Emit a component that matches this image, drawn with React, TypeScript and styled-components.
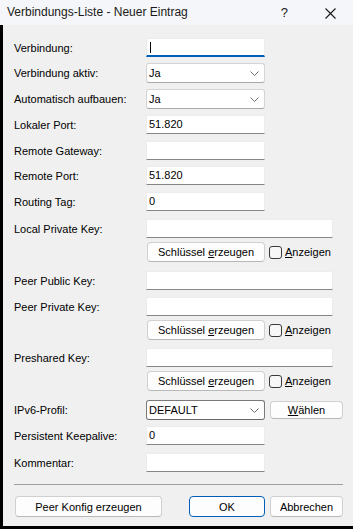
import styled, { createGlobalStyle } from "styled-components";

const GlobalStyle = createGlobalStyle`
  html, body {
    margin: 0;
    padding: 0;
    background: #f0f0f0;
  }
  body {
    font-family: "Liberation Sans", Arial, sans-serif;
  }
`;

function App(): JSX.Element {
  return (
    <Window>
      <GlobalStyle />
      <TitleBar>
        <Title>Verbindungs-Liste - Neuer Eintrag</Title>
        <TitleButtons>
          <HelpGlyph>?</HelpGlyph>
          <CloseIcon width="11" height="11" viewBox="0 0 11 11">
            <path d="M0.5 0.5 L10.5 10.5 M10.5 0.5 L0.5 10.5" stroke="#1a1a1a" strokeWidth="1.1" />
          </CloseIcon>
        </TitleButtons>
      </TitleBar>

      <Body>
        <Row $mt={0}>
          <Label>Verbindung:</Label>
          <TextBox $focused>
            <Caret />
          </TextBox>
        </Row>
        <Row $mt={6}>
          <Label>Verbindung aktiv:</Label>
          <Combo value="Ja" />
        </Row>
        <Row $mt={7}>
          <Label>Automatisch aufbauen:</Label>
          <Combo value="Ja" />
        </Row>
        <Row $mt={7}>
          <Label>Lokaler Port:</Label>
          <TextBox>51.820</TextBox>
        </Row>
        <Row $mt={7}>
          <Label>Remote Gateway:</Label>
          <TextBox />
        </Row>
        <Row $mt={6}>
          <Label>Remote Port:</Label>
          <TextBox>51.820</TextBox>
        </Row>
        <Row $mt={7}>
          <Label>Routing Tag:</Label>
          <TextBox>0</TextBox>
        </Row>

        <Row $mt={8}>
          <Label>Local Private Key:</Label>
          <TextBox $wide />
        </Row>
        <KeyActions />

        <Row $mt={9}>
          <Label>Peer Public Key:</Label>
          <TextBox $wide />
        </Row>
        <Row $mt={7}>
          <Label>Peer Private Key:</Label>
          <TextBox $wide />
        </Row>
        <KeyActions />

        <Row $mt={8}>
          <Label>Preshared Key:</Label>
          <TextBox $wide />
        </Row>
        <KeyActions />

        <Row $mt={9} $h={20}>
          <Label>IPv6-Profil:</Label>
          <Inline>
            <Combo value="DEFAULT" dark />
            <SmallButton $w={73}>
              <span>
                <u>W</u>ählen
              </span>
            </SmallButton>
          </Inline>
        </Row>
        <Row $mt={6}>
          <Label>Persistent Keepalive:</Label>
          <TextBox>0</TextBox>
        </Row>
        <Row $mt={8}>
          <Label>Kommentar:</Label>
          <TextBox />
        </Row>

        <Separator />

        <Footer>
          <PushButton $w={147}>Peer Konfig erzeugen</PushButton>
          <FooterRight>
            <PushButton $w={76} $default>
              OK
            </PushButton>
            <PushButton $w={73}>Abbrechen</PushButton>
          </FooterRight>
        </Footer>
      </Body>
    </Window>
  );
}

function Combo({ value, dark }: { value: string; dark?: boolean }): JSX.Element {
  return (
    <ComboBox $dark={dark}>
      <span>{value}</span>
      <svg width="9" height="5" viewBox="0 0 9 5">
        <polyline points="0.5,0.5 4.5,4.5 8.5,0.5" fill="none" stroke="#606060" strokeWidth="0.9" />
      </svg>
    </ComboBox>
  );
}

function KeyActions(): JSX.Element {
  return (
    <ActionRow>
      <PushButton $w={118} $h={20}>
        <span>
          Schlüssel <u>e</u>rzeugen
        </span>
      </PushButton>
      <CheckLabel>
        <CheckBox />
        <span>
          <u>A</u>nzeigen
        </span>
      </CheckLabel>
    </ActionRow>
  );
}

export default App;

const Window = styled.div`
  width: 353px;
  height: 529px;
  display: flex;
  flex-direction: column;
  overflow: hidden;
`;

const TitleBar = styled.div`
  height: 25px;
  flex: 0 0 25px;
  background: #f5f6f9;
  display: flex;
  align-items: center;
  justify-content: space-between;
  padding: 0 17px 0 7px;
`;

const Title = styled.span`
  font-size: 12px;
  color: #1a1a1a;
  margin-top: -1px;
`;

const TitleButtons = styled.div`
  display: flex;
  align-items: center;
  gap: 37px;
`;

const HelpGlyph = styled.span`
  font-size: 13px;
  color: #1a1a1a;
`;

const CloseIcon = styled.svg`
  display: block;
  margin-top: 1px;
`;

const Body = styled.div`
  flex: 1;
  background: #f0f0f0;
  border-left: 3px solid #000;
  border-bottom: 3px solid #000;
  padding: 13px 10px 8px 11px;
  display: flex;
  flex-direction: column;
`;

const Row = styled.div<{ $mt: number; $h?: number }>`
  display: grid;
  grid-template-columns: 132px 1fr;
  align-items: center;
  height: ${(p) => p.$h ?? 19}px;
  margin-top: ${(p) => p.$mt}px;
`;

const Label = styled.span`
  font-size: 11px;
  color: #000;
  white-space: nowrap;
`;

const TextBox = styled.div<{ $wide?: boolean; $focused?: boolean }>`
  box-sizing: border-box;
  position: relative;
  width: ${(p) => (p.$wide ? 187 : 119)}px;
  height: 19px;
  background: #fff;
  border: 1px solid #ececec;
  border-bottom: ${(p) => (p.$focused ? "2px solid #005fb8" : "1px solid #868686")};
  font-size: 11px;
  line-height: 16px;
  padding: 0 2px;
  color: #000;
`;

const Caret = styled.span`
  position: absolute;
  left: 3px;
  top: 3px;
  width: 1px;
  height: 11px;
  background: #000;
`;

const ComboBox = styled.div<{ $dark?: boolean }>`
  box-sizing: border-box;
  width: 119px;
  height: 20px;
  background: #fff;
  border: 1px solid ${(p) => (p.$dark ? "#7a7a7a" : "#d4d4d4")};
  border-bottom-color: ${(p) => (p.$dark ? "#6a6a6a" : "#a8a8a8")};
  border-radius: 3px;
  display: flex;
  align-items: center;
  justify-content: space-between;
  padding: 0 5px 0 2px;
  font-size: 11px;
  color: #000;
`;

const Inline = styled.div`
  display: flex;
  align-items: center;
  gap: 5px;
`;

const ActionRow = styled.div`
  display: flex;
  align-items: center;
  height: 20px;
  margin-top: 4px;
  padding-left: 133px;
  gap: 4px;
`;

const PushButton = styled.div<{ $w: number; $h?: number; $default?: boolean }>`
  box-sizing: border-box;
  width: ${(p) => p.$w}px;
  height: ${(p) => p.$h ?? 21}px;
  background: #fdfdfd;
  border: 1px solid ${(p) => (p.$default ? "#005fb8" : "#d0d0d0")};
  border-bottom-color: ${(p) => (p.$default ? "#005fb8" : "#b8b8b8")};
  border-radius: 4px;
  display: flex;
  align-items: center;
  justify-content: center;
  font-size: 11px;
  color: #000;
  white-space: nowrap;
`;

const SmallButton = styled(PushButton)`
  height: 18px;
`;

const CheckLabel = styled.div`
  display: flex;
  align-items: center;
  gap: 3px;
  font-size: 11px;
  color: #000;
`;

const CheckBox = styled.span`
  box-sizing: border-box;
  width: 13px;
  height: 13px;
  border: 1px solid #3a3a3a;
  border-radius: 3px;
  background: #f7f7f7;
`;

const Separator = styled.div`
  height: 1px;
  background: #a0a0a0;
  margin: 12px 0 0 0;
`;

const Footer = styled.div`
  display: flex;
  justify-content: space-between;
  margin-top: 11px;
  padding-left: 1px;
`;

const FooterRight = styled.div`
  display: flex;
  gap: 5px;
`;
